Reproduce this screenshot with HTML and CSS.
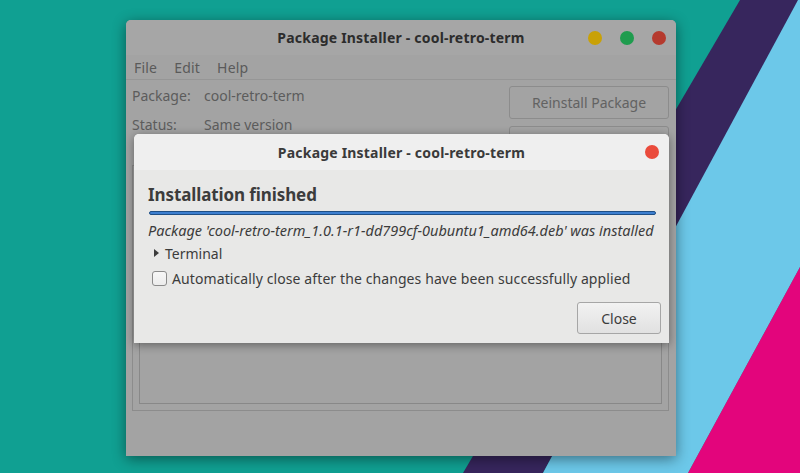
FILE: index.html
```html
<!DOCTYPE html>
<html>
<head>
<meta charset="utf-8">
<link rel="stylesheet" href="styles.css">
</head>
<body>
<div class="desktop">
  <svg class="wallpaper" width="800" height="473" viewBox="0 0 800 473">
    <rect x="0" y="0" width="800" height="473" fill="#10a092"/>
    <polygon points="740,0 800,0 800,0 543,473 463,473" fill="#37265d"/>
    <polygon points="798,0 800,0 800,267 688,473 543,473" fill="#6cc8e9"/>
    <polygon points="800,267 800,473 688,473" fill="#e3057c"/>
  </svg>

  <div class="window main">
    <div class="titlebar">
      <span class="title">Package Installer - cool-retro-term</span>
      <div class="lights">
        <span class="dot yellow"></span>
        <span class="dot green"></span>
        <span class="dot red"></span>
      </div>
    </div>
    <div class="menubar">
      <span>File</span><span>Edit</span><span>Help</span>
    </div>
    <div class="content">
      <div class="info">
        <div class="row"><span class="label">Package:</span><span>cool-retro-term</span></div>
        <div class="row"><span class="label">Status:</span><span>Same version</span></div>
      </div>
      <div class="actions">
        <div class="btn">Reinstall Package</div>
        <div class="btn">&nbsp;</div>
      </div>
    </div>
    <div class="frame"><div class="inner"></div></div>
  </div>

  <div class="window dialog">
    <div class="dtitlebar">
      <span class="title">Package Installer - cool-retro-term</span>
      <span class="dot close"></span>
    </div>
    <div class="dbody">
      <div class="heading">Installation finished</div>
      <div class="progress"></div>
      <div class="msg">Package 'cool-retro-term_1.0.1-r1-dd799cf-0ubuntu1_amd64.deb' was installed</div>
      <div class="expander"><span class="tri"></span>Terminal</div>
      <div class="check"><span class="box"></span>Automatically close after the changes have been successfully applied</div>
      <div class="footer"><div class="closebtn">Close</div></div>
    </div>
  </div>
</div>
</body>
</html>
```

FILE: styles.css
```css
html, body {
  margin: 0;
  padding: 0;
}
body {
  font-family: "Noto Sans", "DejaVu Sans", sans-serif;
  font-size: 14px;
  width: 800px;
  height: 473px;
  overflow: hidden;
}
.desktop {
  position: relative;
  width: 800px;
  height: 473px;
  overflow: hidden;
}
.wallpaper {
  position: absolute;
  left: 0;
  top: 0;
}
.window {
  position: absolute;
  box-sizing: border-box;
}
.main {
  left: 126px;
  top: 20px;
  width: 550px;
  height: 436px;
  background: #a3a3a3;
  border-radius: 5px 5px 0 0;
  box-shadow: 0 3px 14px rgba(0,0,0,0.45);
  display: flex;
  flex-direction: column;
}
.titlebar {
  height: 35px;
  background: #a6a6a6;
  border-radius: 5px 5px 0 0;
  display: flex;
  align-items: center;
  justify-content: center;
  position: relative;
}
.title {
  font-weight: bold;
  font-size: 14px;
  color: #2c2c2c;
  letter-spacing: 0.2px;
}
.lights {
  position: absolute;
  right: 10px;
  top: 11px;
  display: flex;
  gap: 18px;
}
.dot {
  width: 14px;
  height: 14px;
  border-radius: 50%;
  display: block;
}
.yellow { background: #c9a106; }
.green { background: #1f9c4e; }
.red { background: #b53a2e; }
.menubar {
  height: 25px;
  box-sizing: border-box;
  border-bottom: 1px solid #969696;
  display: flex;
  align-items: center;
  gap: 17px;
  padding-left: 8px;
  color: #5a5a5a;
  font-size: 14px;
  letter-spacing: 0.2px;
}
.content {
  display: flex;
  justify-content: space-between;
  padding: 6px 7px 0 6px;
}
.info {
  color: #5c5c5c;
  display: flex;
  flex-direction: column;
  gap: 10px;
}
.row {
  height: 19px;
  display: flex;
  align-items: center;
}
.label {
  width: 72px;
}
.actions {
  display: flex;
  flex-direction: column;
  gap: 7px;
}
.btn {
  width: 160px;
  height: 33px;
  box-sizing: border-box;
  border: 1px solid #8c8c8c;
  border-radius: 3px;
  display: flex;
  align-items: center;
  justify-content: center;
  color: #626262;
  font-size: 14px;
}
.frame {
  margin: 6px 7px 0 6px;
  flex: 0 0 auto;
  height: 246px;
  box-sizing: border-box;
  border: 1px solid #8c8c8c;
  padding: 6px;
}
.inner {
  height: 100%;
  box-sizing: border-box;
  border: 1px solid #888;
}
.dialog {
  left: 134px;
  top: 134px;
  width: 535px;
  height: 209px;
  background: #e8e8e7;
  border-radius: 5px 5px 0 0;
  box-shadow: 0 2px 10px rgba(0,0,0,0.4);
  display: flex;
  flex-direction: column;
}
.dtitlebar {
  height: 36px;
  background: #efefef;
  border-radius: 5px 5px 0 0;
  display: flex;
  align-items: center;
  justify-content: center;
  position: relative;
}
.dtitlebar .title {
  color: #3a3a3a;
}
.close {
  position: absolute;
  right: 10px;
  top: 11px;
  background: #ea4b3c;
}
.dbody {
  padding: 0 13px 0 14px;
  color: #3c3c3c;
}
.heading {
  font-weight: bold;
  font-size: 17px;
  margin-top: 12px;
  height: 26px;
  line-height: 26px;
  letter-spacing: -0.1px;
}
.progress {
  margin-top: 3px;
  height: 4px;
  box-sizing: border-box;
  background: #3d7fd0;
  border: 1px solid #1f4f86;
  border-radius: 2px;
  margin-left: 1px;
}
.msg {
  font-style: italic;
  font-size: 14.5px;
  height: 22px;
  line-height: 22px;
  margin-top: 4px;
  white-space: nowrap;
}
.expander {
  height: 24px;
  display: flex;
  align-items: center;
  font-size: 14px;
}
.tri {
  width: 0;
  height: 0;
  border-left: 5px solid #3c3c3c;
  border-top: 4.5px solid transparent;
  border-bottom: 4.5px solid transparent;
  margin: 0 6px 0 6px;
}
.check {
  height: 26px;
  display: flex;
  align-items: center;
  font-size: 14px;
  letter-spacing: 0.1px;
}
.box {
  width: 15px;
  height: 15px;
  box-sizing: border-box;
  border: 1px solid #8b8b8b;
  border-radius: 3px;
  background: linear-gradient(#f7f7f7, #ececec);
  margin: 0 5px 0 4px;
}
.footer {
  display: flex;
  justify-content: flex-end;
  margin-top: 11px;
  margin-right: -5px;
}
.closebtn {
  width: 84px;
  height: 32px;
  box-sizing: border-box;
  border: 1px solid #a6a6a6;
  border-radius: 3px;
  background: linear-gradient(#f2f2f2, #e1e1e1);
  display: flex;
  align-items: center;
  justify-content: center;
  color: #3c3c3c;
  font-size: 14px;
}
```
